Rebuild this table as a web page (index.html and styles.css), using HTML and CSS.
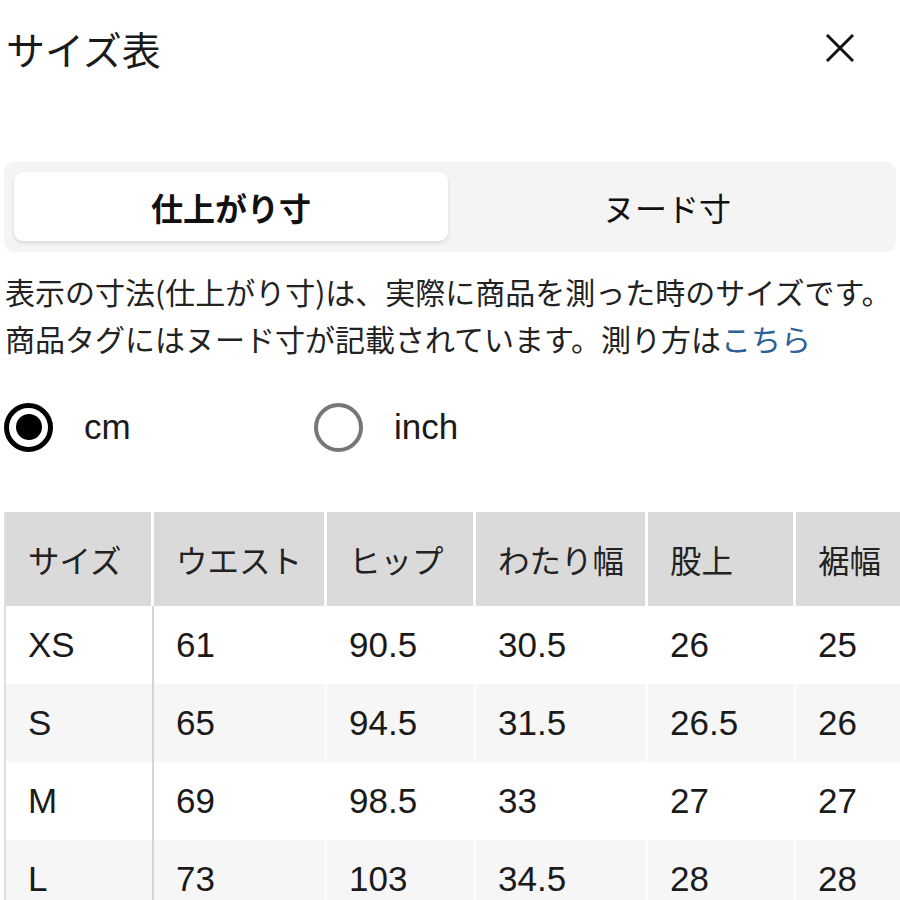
FILE: index.html
```html
<!DOCTYPE html>
<html lang="ja">
<head>
<meta charset="utf-8">
<title>サイズ表</title>
<link rel="stylesheet" href="styles.css">
</head>
<body>
<div class="page">
  <header class="top">
    <h1 class="title">サイズ表</h1>
    <button class="close" aria-label="閉じる">
      <svg width="30" height="30" viewBox="0 0 30 30"><path d="M2 2 L28 28 M28 2 L2 28" stroke="#111" stroke-width="3" fill="none"/></svg>
    </button>
  </header>

  <div class="segment">
    <div class="seg-btn active">仕上がり寸</div>
    <div class="seg-btn">ヌード寸</div>
  </div>

  <p class="desc">表示の寸法(仕上がり寸)は、実際に商品を測った時のサイズです。<br>商品タグにはヌード寸が記載されています。測り方は<a class="link" href="#">こちら</a></p>

  <div class="units">
    <label class="unit"><span class="radio checked"></span><span class="unit-label">cm</span></label>
    <label class="unit"><span class="radio"></span><span class="unit-label">inch</span></label>
  </div>

  <div class="table">
    <div class="row head">
      <div class="cell">サイズ</div>
      <div class="cell">ウエスト</div>
      <div class="cell">ヒップ</div>
      <div class="cell">わたり幅</div>
      <div class="cell">股上</div>
      <div class="cell">裾幅</div>
    </div>
    <div class="row">
      <div class="cell">XS</div><div class="cell">61</div><div class="cell">90.5</div><div class="cell">30.5</div><div class="cell">26</div><div class="cell">25</div>
    </div>
    <div class="row alt">
      <div class="cell">S</div><div class="cell">65</div><div class="cell">94.5</div><div class="cell">31.5</div><div class="cell">26.5</div><div class="cell">26</div>
    </div>
    <div class="row">
      <div class="cell">M</div><div class="cell">69</div><div class="cell">98.5</div><div class="cell">33</div><div class="cell">27</div><div class="cell">27</div>
    </div>
    <div class="row alt">
      <div class="cell">L</div><div class="cell">73</div><div class="cell">103</div><div class="cell">34.5</div><div class="cell">28</div><div class="cell">28</div>
    </div>
  </div>
</div>
</body>
</html>
```

FILE: styles.css
```css
html, body {
  margin: 0;
  padding: 0;
  background: #fff;
}
body {
  font-family: "Liberation Sans", "Noto Sans CJK JP", sans-serif;
  color: #1a1a1a;
  width: 900px;
  height: 900px;
  overflow: hidden;
}
.page {
  width: 900px;
}
.top {
  display: flex;
  align-items: center;
  justify-content: space-between;
  padding: 28px 45px 0 6px;
  height: 40px;
}
.title {
  margin: 0;
  font-family: "Noto Sans CJK JP", sans-serif;
  font-weight: 400;
  font-size: 39px;
  line-height: 40px;
  letter-spacing: 0;
}
.close {
  border: 0;
  background: none;
  padding: 0;
  width: 30px;
  height: 30px;
  display: flex;
}
.segment {
  margin: 94px 4px 0 4px;
  height: 90px;
  box-sizing: border-box;
  padding: 10px 10px 11px 10px;
  background: #f4f4f4;
  border-radius: 10px;
  display: grid;
  grid-template-columns: 434px 1fr;
}
.seg-btn {
  display: flex;
  align-items: center;
  justify-content: center;
  font-family: "Noto Sans CJK JP", sans-serif;
  font-size: 32px;
  color: #111;
  border-radius: 9px;
}
.seg-btn.active {
  background: #fff;
  font-weight: 700;
  box-shadow: 0 2px 4px rgba(0,0,0,0.12);
}
.desc {
  margin: 16px 0 0 0;
  padding-left: 5px;
  font-family: "Noto Sans CJK JP", sans-serif;
  font-size: 30px;
  line-height: 47px;
  color: #222;
  white-space: nowrap;
}
.link {
  color: #2b6099;
  text-decoration: none;
}
.units {
  display: flex;
  margin-top: 40px;
  padding-left: 4px;
  height: 50px;
}
.unit {
  display: flex;
  align-items: center;
  width: 310px;
}
.radio {
  width: 49px;
  height: 49px;
  box-sizing: border-box;
  border: 4px solid #777;
  border-radius: 50%;
  display: flex;
  align-items: center;
  justify-content: center;
  flex: none;
}
.radio.checked {
  border: 5px solid #000;
}
.radio.checked::after {
  content: "";
  width: 26px;
  height: 26px;
  border-radius: 50%;
  background: #000;
}
.unit-label {
  margin-left: 31px;
  font-size: 35px;
  color: #1a1a1a;
}
.table {
  margin: 60px 0 0 4px;
  border-left: 2px solid #dedede;
  width: 896px;
  overflow: hidden;
}
.row {
  display: grid;
  grid-template-columns: 148px 173px 149px 172px 148px 160px;
  height: 78px;
  width: 950px;
}
.row.head {
  height: 94px;
}
.cell {
  display: flex;
  align-items: center;
  padding-left: 22px;
  font-size: 35px;
  color: #1a1a1a;
  box-sizing: border-box;
  border-right: 2px solid transparent;
}
.row.head .cell {
  background: #dadada;
  border-right: 3px solid #fff;
  font-family: "Noto Sans CJK JP", sans-serif;
  font-size: 31.5px;
  color: #222;
}
.row .cell:first-child {
  border-right: 2px solid #d4d4d4;
}
.row.head .cell:first-child {
  border-right: 3px solid #fff;
}
.row.alt .cell {
  background: #f6f6f6;
  border-right: 2px solid #fdfdfd;
}
.row.alt .cell:first-child {
  border-right: 2px solid #d4d4d4;
}
```
